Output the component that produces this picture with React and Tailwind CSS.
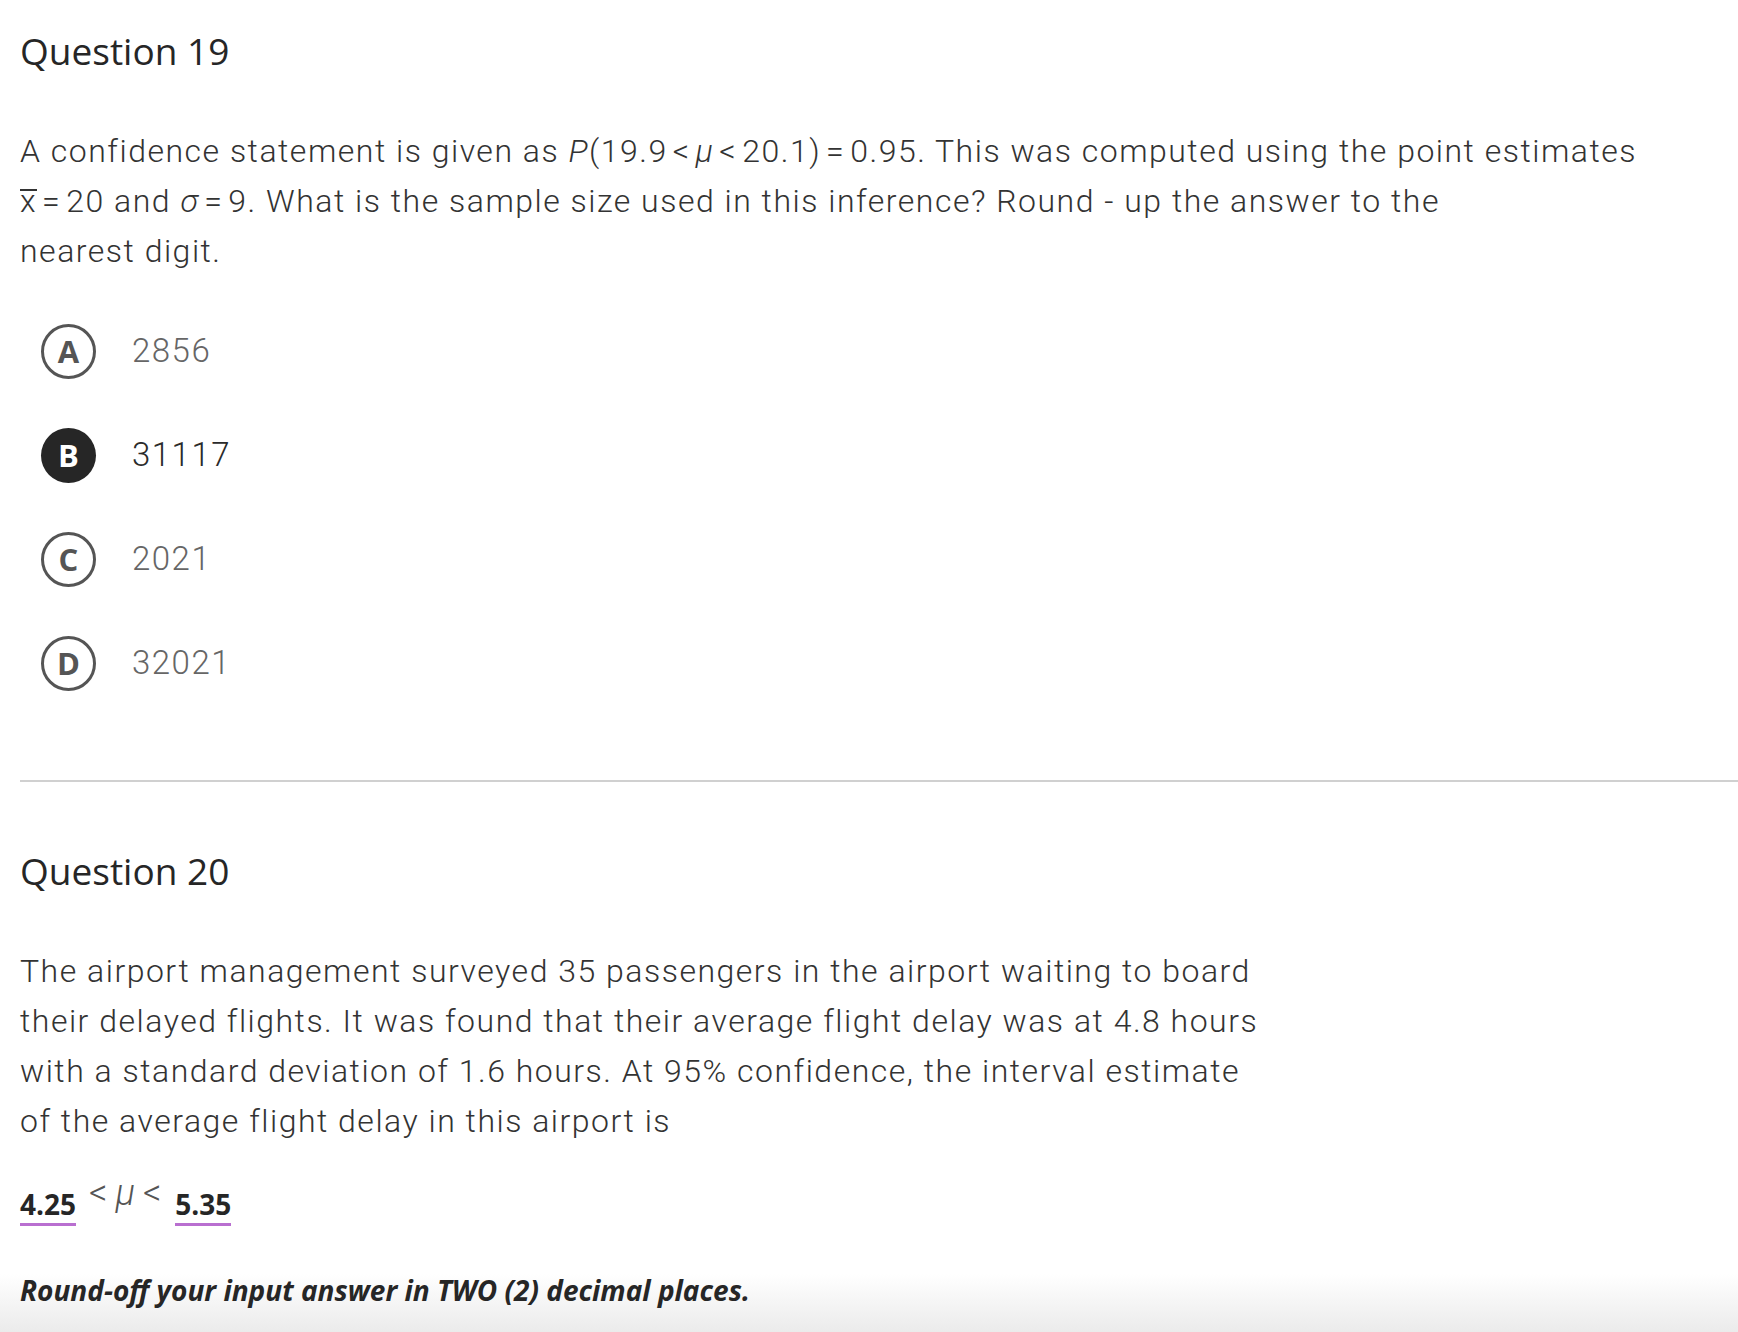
import React from 'react';

const options = [
  { key: 'A', value: '2856' },
  { key: 'B', value: '31117', selected: true },
  { key: 'C', value: '2021' },
  { key: 'D', value: '32021' },
];

function Op({ children }) {
  return <span className="mx-[5px]">{children}</span>;
}

function Option({ letter, value, selected }) {
  return (
    <div className="flex h-[104px] items-center">
      <div
        className={
          selected
            ? 'ml-[41px] flex h-[55px] w-[55px] items-center justify-center rounded-full bg-[#262626] font-["Open_Sans",sans-serif] text-[31px] font-bold text-white'
            : 'ml-[41px] flex h-[55px] w-[55px] items-center justify-center rounded-full border-[3px] border-[#555] font-["Open_Sans",sans-serif] text-[31px] font-bold text-[#555]'
        }
      >
        {letter}
      </div>
      <span
        className={
          selected
            ? 'ml-[36px] font-["Roboto",sans-serif] text-[33px] font-light tracking-[1.5px] text-[#2b2b2b]'
            : 'ml-[36px] font-["Roboto",sans-serif] text-[33px] font-light tracking-[1.5px] text-[#666]'
        }
      >
        {value}
      </span>
    </div>
  );
}

export default function App() {
  return (
    <div className="relative min-h-screen overflow-hidden bg-white">
      {/* bottom fade behind the content */}
      <div className="pointer-events-none absolute inset-x-0 bottom-0 h-[58px] bg-linear-to-b from-white to-[#ebebeb]" />

      <div className="relative pt-[27px]">
        {/* Question 19 */}
        <h2 className='pl-[20px] font-["Open_Sans",sans-serif] text-[37px] font-medium leading-[48px] text-[#262626]'>
          Question 19
        </h2>

        <p className='mt-[51px] pl-[20px] whitespace-nowrap font-["Roboto",sans-serif] text-[32px] font-light leading-[50px] tracking-[1.5px] text-[#333]'>
          A confidence statement is given as <i>P</i>(19.9<Op>&lt;</Op><i>μ</i><Op>&lt;</Op>20.1)<Op>=</Op>0.95. This was computed using the point estimates
          <br />
          <span className="inline-block border-t-2 border-[#333] leading-[20px]">x</span><Op>=</Op>20 and <i>σ</i><Op>=</Op>9. What is the sample size used in this inference? Round - up the answer to the
          <br />
          nearest digit.
        </p>

        <div className="mt-[23px] flex flex-col">
          {options.map((o) => (
            <Option key={o.key} letter={o.key} value={o.value} selected={o.selected} />
          ))}
        </div>

        <div className="ml-[20px] mt-[65px] h-[2px] bg-[#d0d0d0]" />

        {/* Question 20 */}
        <h2 className='mt-[65px] pl-[20px] font-["Open_Sans",sans-serif] text-[37px] font-medium leading-[48px] text-[#262626]'>
          Question 20
        </h2>

        <p className='mt-[51px] pl-[20px] whitespace-nowrap font-["Roboto",sans-serif] text-[32px] font-light leading-[50px] tracking-[1.5px] text-[#333]'>
          The airport management surveyed 35 passengers in the airport waiting to board
          <br />
          their delayed flights. It was found that their average flight delay was at 4.8 hours
          <br />
          with a standard deviation of 1.6 hours. At 95% confidence, the interval estimate
          <br />
          of the average flight delay in this airport is
        </p>

        <div className='mt-[27px] pl-[20px] font-["Open_Sans",sans-serif] leading-[40px] whitespace-nowrap'>
          <span className="inline-block border-b-[3px] border-[#b96fd0] pb-[3px] text-[28px] font-bold leading-[32px] text-[#262626]">
            4.25
          </span>
          <span className='ml-[13px] mr-[14px] align-[10px] font-["Roboto",sans-serif] text-[36px] font-light text-[#555]'>
            &lt;<i className="mx-[8px]">μ</i>&lt;
          </span>
          <span className="inline-block border-b-[3px] border-[#b96fd0] pb-[3px] text-[28px] font-bold leading-[32px] text-[#262626]">
            5.35
          </span>
        </div>

        <p className='mt-[42px] pl-[20px] font-["Open_Sans",sans-serif] text-[28px] font-bold italic leading-[38px] text-[#262626]'>
          Round-off your input answer in TWO (2) decimal places.
        </p>
      </div>
    </div>
  );
}
